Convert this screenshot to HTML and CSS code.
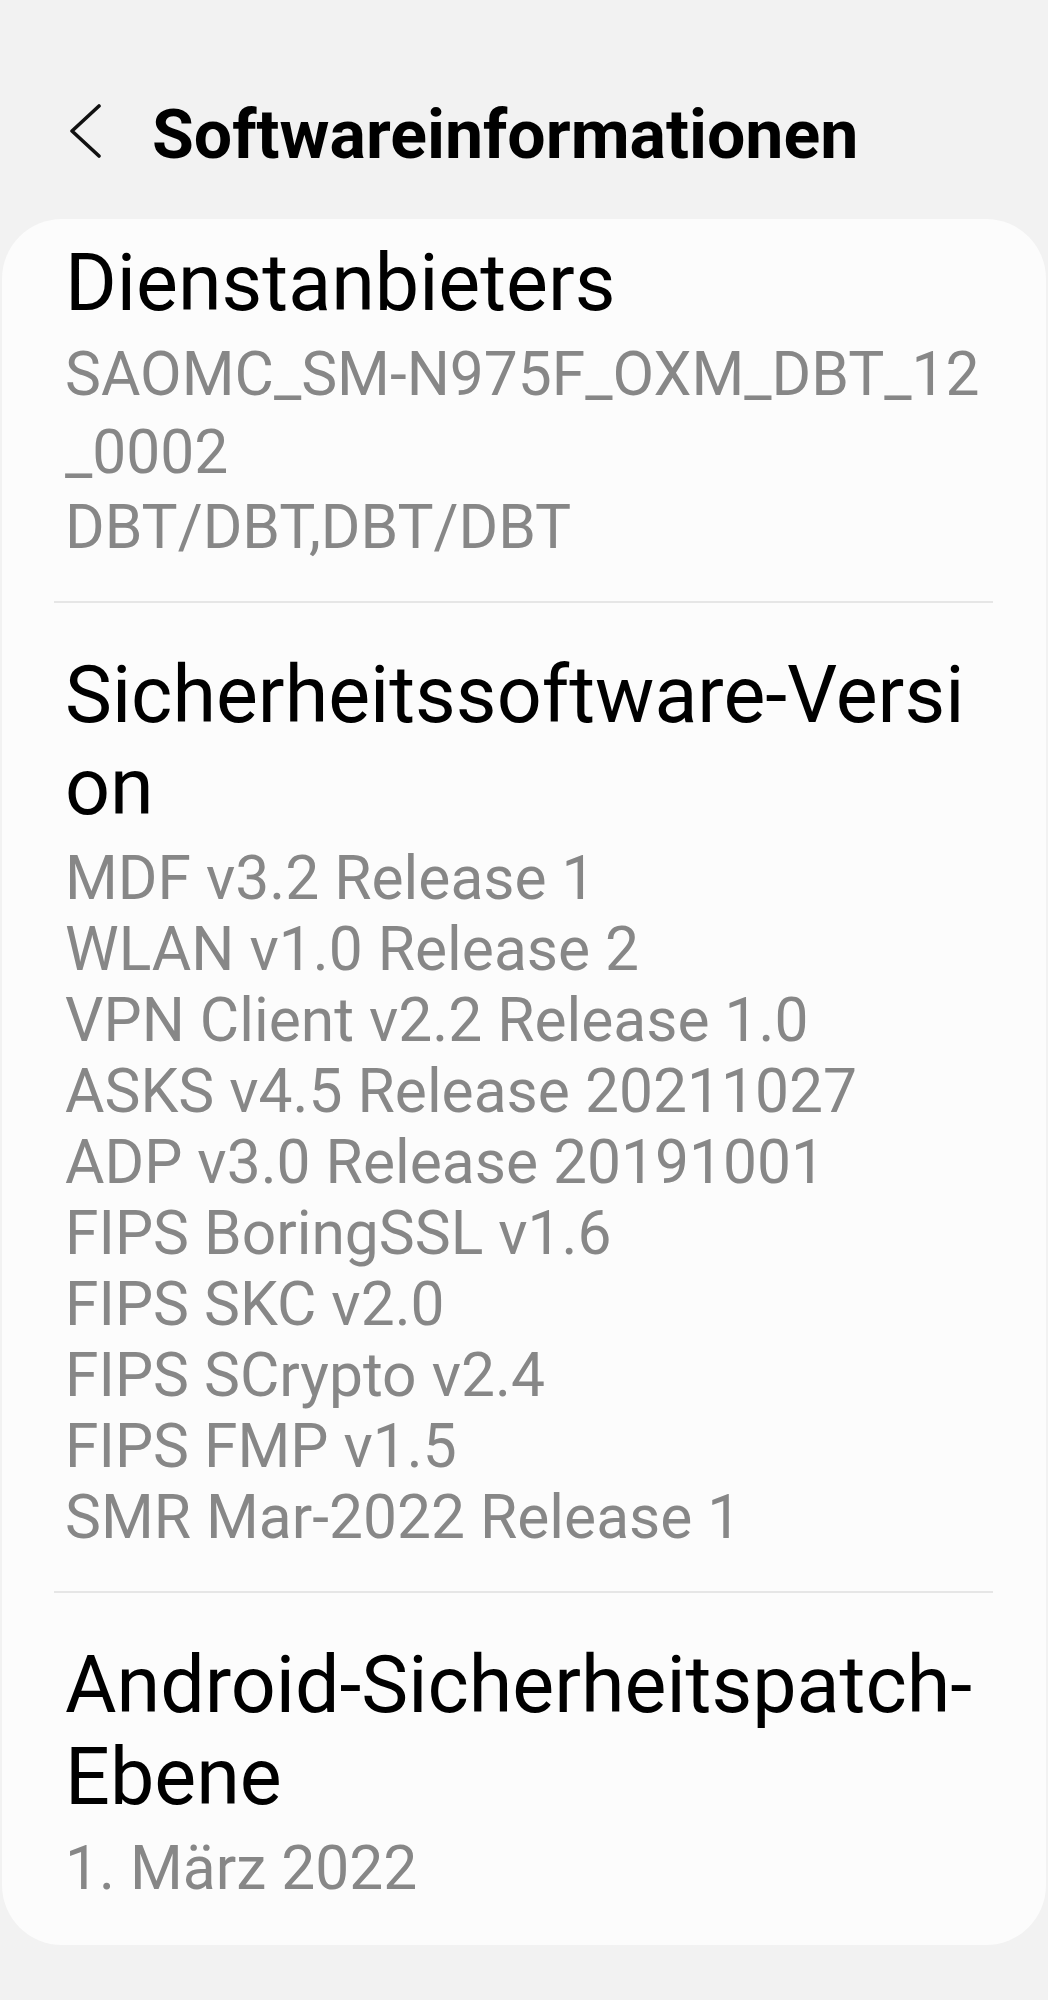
FILE: index.html
```html
<!DOCTYPE html>
<html lang="de">

<head>
    <meta charset="utf-8">
    <title>Softwareinformationen</title>
    <link rel="stylesheet" href="styles.css">
</head>

<body>

    <div class="topbar">
        <button class="back" aria-label="Zurück">
            <svg width="32" height="56" viewBox="0 0 32 56">
                <path d="M29 2 L2 27 L29 52" fill="none" stroke="#111" stroke-width="3.6"
                    stroke-linecap="round" stroke-linejoin="round" />
            </svg>
        </button>
        <h1 class="title">Softwareinformationen</h1>
    </div>

    <div class="card">
        <div class="item">
            <div class="item-title">Dienstanbieters</div>
            <div class="item-value wide">SAOMC_SM-N975F_OXM_DBT_12<br>_0002</div>
            <div class="item-value">DBT/DBT,DBT/DBT</div>
        </div>

        <div class="divider"></div>

        <div class="item">
            <div class="item-title">Sicherheitssoftware-Versi<br>on</div>
            <div class="item-value">
                MDF v3.2 Release 1<br>
                WLAN v1.0 Release 2<br>
                VPN Client v2.2 Release 1.0<br>
                ASKS v4.5 Release 20211027<br>
                ADP v3.0 Release 20191001<br>
                FIPS BoringSSL v1.6<br>
                FIPS SKC v2.0<br>
                FIPS SCrypto v2.4<br>
                FIPS FMP v1.5<br>
                SMR Mar-2022 Release 1
            </div>
        </div>

        <div class="divider"></div>

        <div class="item">
            <div class="item-title">Android-Sicherheitspatch-<br>Ebene</div>
            <div class="item-value">1. März 2022</div>
        </div>
    </div>

</body>

</html>
```

FILE: styles.css
```css
body {
    margin: 0;
    background: #f2f2f2;
    font-family: Roboto, "Noto Sans", sans-serif;
    color: #000;
}

/* header */
.topbar {
    display: flex;
    align-items: center;
    gap: 50px;
    height: 80px;
    padding: 95px 0 0 70px;
}

.back {
    padding: 0;
    margin: 0 0 6px 0;
    border: none;
    background: none;
    display: block;
    cursor: pointer;
}

.back svg {
    display: block;
}

.title {
    margin: 0;
    font-size: 68px;
    font-weight: 700;
    line-height: 80px;
    white-space: nowrap;
}

/* list card */
.card {
    margin: 44px 2px 0;
    padding: 18px 53px 41px 52px;
    background: #fcfcfc;
    border-radius: 60px;
}

.item {
    padding-left: 11px;
}

.item-title {
    font-size: 79px;
    line-height: 92px;
    white-space: nowrap;
}

.item-title + .item-value {
    margin-top: 10px;
}

.item-value {
    font-size: 60.5px;
    line-height: 71px;
    color: #878787;
    white-space: nowrap;
}

.item-value.wide {
    line-height: 78px;
    margin-top: 7px;
}

.item-value.wide + .item-value {
    margin-top: 0;
}

.divider {
    height: 2px;
    background: #e6e6e6;
    margin: 38px 0 46px;
}
```
